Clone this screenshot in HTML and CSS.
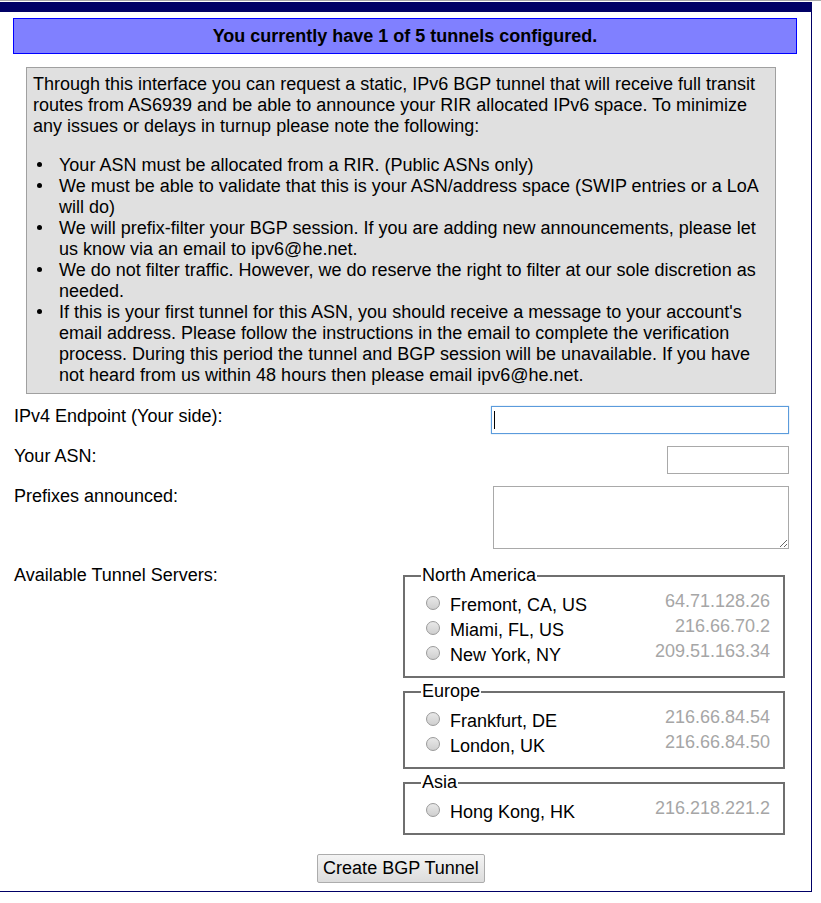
FILE: index.html
```html
<!DOCTYPE html>
<html>
<head>
<meta charset="utf-8">
<title>BGP Tunnel</title>
<link rel="stylesheet" href="styles.css">
</head>
<body>
<div class="topline"></div>
<div class="page">
  <div class="banner">You currently have 1 of 5 tunnels configured.</div>
  <div class="info">
    <p>Through this interface you can request a static, IPv6 BGP tunnel that will receive full transit routes from AS6939 and be able to announce your RIR allocated IPv6 space. To minimize any issues or delays in turnup please note the following:</p>
    <ul>
      <li>Your ASN must be allocated from a RIR. (Public ASNs only)</li>
      <li>We must be able to validate that this is your ASN/address space (SWIP entries or a LoA will do)</li>
      <li>We will prefix-filter your BGP session. If you are adding new announcements, please let us know via an email to ipv6@he.net.</li>
      <li>We do not filter traffic. However, we do reserve the right to filter at our sole discretion as needed.</li>
      <li>If this is your first tunnel for this ASN, you should receive a message to your account's email address. Please follow the instructions in the email to complete the verification process. During this period the tunnel and BGP session will be unavailable. If you have not heard from us within 48 hours then please email ipv6@he.net.</li>
    </ul>
  </div>
  <form class="form">
    <div class="grid">
      <label class="lbl" for="ipv4">IPv4 Endpoint (Your side):</label>
      <span class="caretwrap"><input class="ctl ipv4 focused" id="ipv4" type="text"></span>
      <label class="lbl" for="asn">Your ASN:</label>
      <input class="ctl asn" id="asn" type="text">
      <label class="lbl" for="prefixes">Prefixes announced:</label>
      <textarea class="ctl prefixes" id="prefixes"></textarea>
      <div class="lbl">Available Tunnel Servers:</div>
      <div class="servers">
        <fieldset class="region">
          <legend>North America</legend>
          <label class="srv"><input type="radio" name="srv" class="radio"><span class="city">Fremont, CA, US</span><span class="ip">64.71.128.26</span></label>
          <label class="srv"><input type="radio" name="srv" class="radio"><span class="city">Miami, FL, US</span><span class="ip">216.66.70.2</span></label>
          <label class="srv"><input type="radio" name="srv" class="radio"><span class="city">New York, NY</span><span class="ip">209.51.163.34</span></label>
        </fieldset>
        <fieldset class="region">
          <legend>Europe</legend>
          <label class="srv"><input type="radio" name="srv" class="radio"><span class="city">Frankfurt, DE</span><span class="ip">216.66.84.54</span></label>
          <label class="srv"><input type="radio" name="srv" class="radio"><span class="city">London, UK</span><span class="ip">216.66.84.50</span></label>
        </fieldset>
        <fieldset class="region">
          <legend>Asia</legend>
          <label class="srv"><input type="radio" name="srv" class="radio"><span class="city">Hong Kong, HK</span><span class="ip">216.218.221.2</span></label>
        </fieldset>
      </div>
    </div>
    <div class="actions"><button type="button" class="btn">Create BGP Tunnel</button></div>
  </form>
</div>
</body>
</html>
```
FILE: styles.css
```css
html, body {
  margin: 0;
  padding: 0;
  background: #fff;
}
body {
  font-family: "Liberation Sans", Arial, sans-serif;
  font-size: 18px;
  line-height: 21px;
  color: #000;
}
.topline {
  height: 1px;
  background: #a8a8a8;
  margin-bottom: 1px;
}
.page {
  width: 812px;
  box-sizing: border-box;
  border-top: 10px solid #000066;
  border-right: 1px solid #000066;
  border-bottom: 1px solid #000066;
  padding: 6px 0 8px 0;
}
.banner {
  margin: 0 14px 0 13px;
  border: 1px solid #0000ff;
  background: #8080ff;
  padding: 7px 0 6px 0;
  font-weight: bold;
  text-align: center;
}
.info {
  margin: 13px 0 0 26px;
  width: 750px;
  box-sizing: border-box;
  border: 1px solid #a0a0a0;
  background: #e0e0e0;
  padding: 6px 14px 7px 6px;
}
.info p {
  margin: 0 0 18px 0;
}
.info ul {
  margin: 0;
  padding: 0 0 0 26px;
  list-style: none;
}
.info li::before {
  content: "";
  display: inline-block;
  width: 5px;
  height: 5px;
  border-radius: 50%;
  background: #000;
  margin-left: -22px;
  margin-right: 17px;
  vertical-align: 4px;
}
.form {
  margin: 12px 0 0 13px;
  width: 776px;
}
.grid {
  display: grid;
  grid-template-columns: 1fr auto;
  row-gap: 12px;
  align-items: start;
}
.lbl {
  padding: 0 0 0 1px;
}
.ctl {
  justify-self: end;
  display: block;
  box-sizing: border-box;
  margin: 0;
  border: 1px solid #a9a9a9;
  background: #fff;
  font-family: "Liberation Sans", Arial, sans-serif;
  font-size: 18px;
  padding: 2px 3px;
}
.ctl:focus {
  outline: none;
}
.caretwrap {
  justify-self: end;
  position: relative;
  display: block;
}
.caretwrap::after {
  content: "";
  position: absolute;
  left: 3px;
  top: 5px;
  width: 1px;
  height: 18px;
  background: #000;
}
.ipv4 {
  width: 298px;
  height: 28px;
}
.focused {
  border-color: #5b9bdc;
  box-shadow: 0 0 1px #8fbbe8;
}
.asn {
  width: 122px;
  height: 28px;
}
.prefixes {
  width: 296px;
  height: 63px;
  margin-bottom: 4px;
  resize: both;
}
.servers {
  justify-self: end;
  margin-right: 4px;
  width: 382px;
}
.region {
  margin: 0 0 3px 0;
  width: 382px;
  box-sizing: border-box;
  border: 2px solid #6f6f6f;
  padding: 4px 13px 11px 16px;
}
.region legend {
  padding: 0 1px;
}
.srv {
  display: flex;
  align-items: flex-start;
  height: 25px;
}
.radio {
  appearance: none;
  -webkit-appearance: none;
  margin: 6px 10px 0 5px;
  width: 14px;
  height: 14px;
  border-radius: 50%;
  border: 1px solid #9a9a9a;
  background: linear-gradient(#e8e8e8, #cfcfcf);
  box-sizing: border-box;
  flex: none;
}
.city {
  padding-top: 5px;
}
.ip {
  margin-left: auto;
  padding-top: 1px;
  color: #a6a6a6;
}
.actions {
  display: flex;
  justify-content: center;
  margin-top: 16px;
}
.btn {
  height: 29px;
  padding: 0 5px;
  font-family: "Liberation Sans", Arial, sans-serif;
  font-size: 18px;
  color: #000;
  border: 1px solid #acacac;
  border-radius: 2px;
  background: linear-gradient(#f4f4f4, #dcdcdc);
}
```
